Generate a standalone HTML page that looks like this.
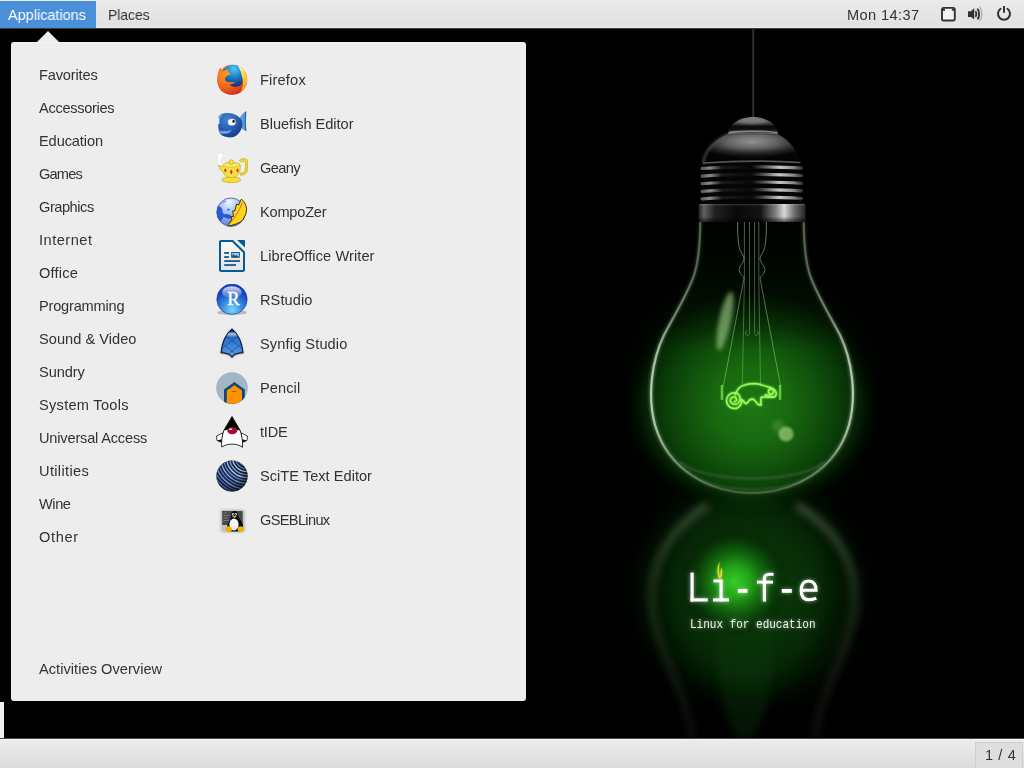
<!DOCTYPE html>
<html><head><meta charset="utf-8">
<style>
*{margin:0;padding:0;box-sizing:border-box}
html,body{width:1024px;height:768px;overflow:hidden;background:#000;font-family:"Liberation Sans",sans-serif;position:relative}
.abs{position:absolute}
#bg{position:absolute;left:0;top:0;width:1024px;height:768px}
#topbar{position:absolute;left:0;top:0;width:1024px;height:29px;background:linear-gradient(#eceef0 0,#eaeaea 1px,#e1e1e1 27px,#ededed 27px,#ededed 28px,#3a3a3a 28px,#3a3a3a 29px)}
#appbtn{position:absolute;left:0;top:1px;width:96px;height:27px;background:#4a90d9}
.tb{position:absolute;will-change:transform;font-size:14.6px;color:#2e3436;white-space:nowrap;line-height:1}
#menu{position:absolute;left:11px;top:42px;width:515px;height:659px;background:#ededed;border-radius:3px;border-top:1px solid #f3f3f3}
#arrow{position:absolute;left:36px;top:31px;width:0;height:0;border-left:12px solid transparent;border-right:12px solid transparent;border-bottom:12px solid #ededed}
.cat{position:absolute;will-change:transform;left:39px;font-size:14.6px;color:#2e3436;white-space:nowrap;line-height:1}
.app{position:absolute;will-change:transform;left:260px;font-size:14.6px;color:#2e3436;white-space:nowrap;line-height:1}
.ic{position:absolute;left:216px;width:32px;height:32px}
#botbar{position:absolute;left:0;top:738px;width:1024px;height:30px;background:linear-gradient(#4a4a4a 0,#4a4a4a 1px,#f6f6f6 1px,#f6f6f6 2px,#ececec 2px,#dcdcdc 30px)}
#ws{position:absolute;left:975px;top:742px;width:48px;height:27px;background:#dedede;border:1px solid #cfcfcf;border-bottom:none}
</style></head>
<body>
<svg id="bg" width="1024" height="768" viewBox="0 0 1024 768"><defs>
 <radialGradient id="gGlass" cx="752" cy="405" r="112" gradientUnits="userSpaceOnUse">
  <stop offset="0" stop-color="#1e7814"/>
  <stop offset="0.35" stop-color="#186810"/>
  <stop offset="0.7" stop-color="#0d460a"/>
  <stop offset="0.92" stop-color="#062c04"/>
  <stop offset="1" stop-color="#041e03"/>
 </radialGradient>
 <linearGradient id="gGlassTop" x1="0" y1="222" x2="0" y2="350" gradientUnits="userSpaceOnUse">
  <stop offset="0" stop-color="#000" stop-opacity="0.95"/>
  <stop offset="0.5" stop-color="#000" stop-opacity="0.7"/>
  <stop offset="1" stop-color="#000" stop-opacity="0"/>
 </linearGradient>
 <radialGradient id="gHalo" cx="752" cy="395" r="150" gradientUnits="userSpaceOnUse">
  <stop offset="0" stop-color="#062a04" stop-opacity="0.9"/>
  <stop offset="0.65" stop-color="#031802" stop-opacity="0.7"/>
  <stop offset="1" stop-color="#000" stop-opacity="0"/>
 </radialGradient>
 <radialGradient id="gReflWide" cx="750" cy="590" r="135" gradientUnits="userSpaceOnUse">
  <stop offset="0" stop-color="#0c420a"/>
  <stop offset="0.4" stop-color="#062a04"/>
  <stop offset="0.75" stop-color="#021202"/>
  <stop offset="1" stop-color="#000" stop-opacity="0"/>
 </radialGradient>
 <linearGradient id="gGhost" x1="0" y1="500" x2="0" y2="740" gradientUnits="userSpaceOnUse">
  <stop offset="0" stop-color="#7a8a70" stop-opacity="0.75"/>
  <stop offset="0.4" stop-color="#5a6a52" stop-opacity="0.45"/>
  <stop offset="1" stop-color="#4a5a42" stop-opacity="0.25"/>
 </linearGradient>
 <radialGradient id="gReflBright" cx="735" cy="582" r="55" gradientUnits="userSpaceOnUse">
  <stop offset="0" stop-color="#38cc26"/>
  <stop offset="0.3" stop-color="#22a018"/>
  <stop offset="0.65" stop-color="#0e600c" stop-opacity="0.6"/>
  <stop offset="1" stop-color="#000" stop-opacity="0"/>
 </radialGradient>
 <linearGradient id="gRing" x1="698.6" y1="0" x2="805.6" y2="0" gradientUnits="userSpaceOnUse">
  <stop offset="0" stop-color="#222"/>
  <stop offset="0.05" stop-color="#626262"/>
  <stop offset="0.15" stop-color="#222"/>
  <stop offset="0.35" stop-color="#090909"/>
  <stop offset="0.58" stop-color="#131313"/>
  <stop offset="0.72" stop-color="#808080"/>
  <stop offset="0.8" stop-color="#d8d8d8"/>
  <stop offset="0.9" stop-color="#6a6a6a"/>
  <stop offset="1" stop-color="#222"/>
 </linearGradient>
 <linearGradient id="gThr" x1="702" y1="0" x2="801.5" y2="0" gradientUnits="userSpaceOnUse">
  <stop offset="0" stop-color="#5a5a5a"/>
  <stop offset="0.08" stop-color="#8a8a8a"/>
  <stop offset="0.2" stop-color="#1a1a1a"/>
  <stop offset="0.5" stop-color="#080808"/>
  <stop offset="0.62" stop-color="#505050"/>
  <stop offset="0.78" stop-color="#c8c8c8"/>
  <stop offset="0.92" stop-color="#8a8a8a"/>
  <stop offset="1" stop-color="#3a3a3a"/>
 </linearGradient>
 <radialGradient id="gShoulder" cx="752" cy="142" r="55" gradientUnits="userSpaceOnUse" gradientTransform="translate(0 99.4) scale(1 0.3)">
  <stop offset="0" stop-color="#9a9a9a"/>
  <stop offset="0.45" stop-color="#6a6a6a"/>
  <stop offset="0.8" stop-color="#2a2a2a"/>
  <stop offset="1" stop-color="#0a0a0a"/>
 </radialGradient>
 <linearGradient id="gShoulderV" x1="0" y1="134" x2="0" y2="163" gradientUnits="userSpaceOnUse">
  <stop offset="0" stop-color="#000" stop-opacity="0"/>
  <stop offset="0.45" stop-color="#000" stop-opacity="0.1"/>
  <stop offset="1" stop-color="#000" stop-opacity="0.85"/>
 </linearGradient>
 <linearGradient id="gRingV" x1="0" y1="203.8" x2="0" y2="221.8" gradientUnits="userSpaceOnUse">
  <stop offset="0" stop-color="#fff" stop-opacity="0.22"/>
  <stop offset="0.12" stop-color="#fff" stop-opacity="0"/>
  <stop offset="0.7" stop-color="#000" stop-opacity="0"/>
  <stop offset="1" stop-color="#000" stop-opacity="0.6"/>
 </linearGradient>
 <linearGradient id="gSock" x1="701" y1="0" x2="802" y2="0" gradientUnits="userSpaceOnUse">
  <stop offset="0" stop-color="#111"/>
  <stop offset="0.08" stop-color="#555"/>
  <stop offset="0.22" stop-color="#141414"/>
  <stop offset="0.6" stop-color="#181818"/>
  <stop offset="0.82" stop-color="#7a7a7a"/>
  <stop offset="0.95" stop-color="#333"/>
  <stop offset="1" stop-color="#111"/>
 </linearGradient>
 <radialGradient id="gDome" cx="752" cy="150" r="45" gradientUnits="userSpaceOnUse" gradientTransform="translate(0 105) scale(1 0.3)">
  <stop offset="0" stop-color="#777"/>
  <stop offset="0.6" stop-color="#3a3a3a"/>
  <stop offset="1" stop-color="#111"/>
 </radialGradient>
 <linearGradient id="gCap" x1="0" y1="117" x2="0" y2="134.2" gradientUnits="userSpaceOnUse">
  <stop offset="0" stop-color="#7a7a7a"/>
  <stop offset="0.3" stop-color="#555"/>
  <stop offset="0.55" stop-color="#0a0a0a"/>
  <stop offset="0.75" stop-color="#111"/>
  <stop offset="1" stop-color="#6a6a6a"/>
 </linearGradient>
 <linearGradient id="gRim" x1="648" y1="0" x2="856" y2="0" gradientUnits="userSpaceOnUse">
  <stop offset="0" stop-color="#d8e8d0" stop-opacity="0.85"/>
  <stop offset="0.12" stop-color="#b8c8b0" stop-opacity="0.55"/>
  <stop offset="0.35" stop-color="#90a888" stop-opacity="0.35"/>
  <stop offset="0.65" stop-color="#90a888" stop-opacity="0.35"/>
  <stop offset="0.88" stop-color="#b8c8b0" stop-opacity="0.55"/>
  <stop offset="1" stop-color="#d8e8d0" stop-opacity="0.85"/>
 </linearGradient>
 <linearGradient id="gWire" x1="0" y1="222" x2="0" y2="386" gradientUnits="userSpaceOnUse">
  <stop offset="0" stop-color="#b0b8b0" stop-opacity="0.7"/>
  <stop offset="0.35" stop-color="#98b890" stop-opacity="0.6"/>
  <stop offset="1" stop-color="#70d048" stop-opacity="0.7"/>
 </linearGradient>
 <filter id="blur1" x="-50%" y="-50%" width="200%" height="200%"><feGaussianBlur stdDeviation="1"/></filter>
 <filter id="blur2" x="-50%" y="-50%" width="200%" height="200%"><feGaussianBlur stdDeviation="2"/></filter>
 <filter id="blur8" x="-50%" y="-50%" width="200%" height="200%"><feGaussianBlur stdDeviation="8"/></filter>
 <filter id="blur4" x="-50%" y="-50%" width="200%" height="200%"><feGaussianBlur stdDeviation="4"/></filter>
 <filter id="glow" x="-50%" y="-50%" width="200%" height="200%"><feGaussianBlur stdDeviation="1.2" result="b"/><feMerge><feMergeNode in="b"/><feMergeNode in="SourceGraphic"/></feMerge></filter>
 <filter id="tglow" x="-20%" y="-50%" width="140%" height="200%"><feGaussianBlur stdDeviation="2.2" result="b"/><feComponentTransfer in="b" result="b2"><feFuncA type="linear" slope="0.55"/></feComponentTransfer><feMerge><feMergeNode in="b2"/><feMergeNode in="SourceGraphic"/></feMerge></filter>
</defs>
<rect width="1024" height="768" fill="#000"/>
<ellipse cx="752" cy="395" rx="150" ry="150" fill="url(#gHalo)"/>
<rect x="600" y="440" width="310" height="300" fill="url(#gReflWide)"/>
<ellipse cx="745" cy="650" rx="28" ry="90" fill="#0a3a07" opacity="0.35" filter="url(#blur4)"/>
<ellipse cx="748" cy="590" rx="80" ry="95" fill="#0a3a07" opacity="0.3" filter="url(#blur8)"/>
<circle cx="735" cy="582" r="55" fill="url(#gReflBright)"/>
<path d="M708 505 C 668 530, 651 565, 652 600 C 654 650, 688 690, 692 740 M796 505 C 838 530, 856 565, 855 600 C 853 650, 818 690, 815 740" fill="none" stroke="url(#gGhost)" stroke-width="5" filter="url(#blur4)"/>
<rect x="752.2" y="28" width="2" height="92" fill="#2e2e2e"/>
<ellipse cx="752" cy="405" rx="112" ry="95" fill="#0c500a" opacity="0.45" filter="url(#blur8)"/>
<path d="M700.3 222 C 700 245, 699 258, 695 272 C 690 290, 676 312, 664 335 C 652 360, 647 395, 655 425 C 668 470, 710 493, 752 493 C 794 493, 836 470, 849 425 C 857 395, 852 360, 840 335 C 828 312, 814 290, 809 272 C 805 258, 804 245, 803.7 222 Z" fill="url(#gGlass)"/>
<path d="M700.3 222 C 700 245, 699 258, 695 272 C 690 290, 676 312, 664 335 C 652 360, 647 395, 655 425 C 668 470, 710 493, 752 493 C 794 493, 836 470, 849 425 C 857 395, 852 360, 840 335 C 828 312, 814 290, 809 272 C 805 258, 804 245, 803.7 222 Z" fill="url(#gGlassTop)"/>
<path d="M700.3 222 C 700 245, 699 258, 695 272 C 690 290, 676 312, 664 335 C 652 360, 647 395, 655 425 C 668 470, 710 493, 752 493 C 794 493, 836 470, 849 425 C 857 395, 852 360, 840 335 C 828 312, 814 290, 809 272 C 805 258, 804 245, 803.7 222" fill="none" stroke="url(#gRim)" stroke-width="2.2"/>
<path d="M700.3 222 C 700 245, 699 258, 695 272 C 690 290, 676 312, 664 335 C 652 360, 647 395, 655 425 C 668 470, 710 493, 752 493 C 794 493, 836 470, 849 425 C 857 395, 852 360, 840 335 C 828 312, 814 290, 809 272 C 805 258, 804 245, 803.7 222" fill="none" stroke="url(#gRim)" stroke-width="5" opacity="0.35" filter="url(#blur1)"/>
<path d="M680 462 C 705 484, 800 484, 824 462" fill="none" stroke="#8aa080" stroke-opacity="0.3" stroke-width="2" filter="url(#blur1)"/>
<path d="M700 480 C 725 492, 780 492, 804 480" fill="none" stroke="#8aa080" stroke-opacity="0.25" stroke-width="1.5" filter="url(#blur1)"/>
<g fill="none" stroke-width="0.9">
 <path d="M737.6 222 C 737.6 235, 738 244, 740 250 C 742 254, 744 256, 744 259 C 744 262, 739 266, 739 270 C 739 274, 744 276, 744 278 L 723.4 386" stroke="url(#gWire)"/>
 <path d="M766.4 222 C 766.4 235, 766 244, 764 250 C 762 254, 760 256, 760 259 C 760 262, 765 266, 765 270 C 765 274, 760 276, 760 278 L 780.6 386" stroke="url(#gWire)"/>
 <path d="M744.4 222 L 744.4 280 L 742.3 386" stroke="url(#gWire)" stroke-width="0.7"/>
 <path d="M758.8 222 L 758.8 280 L 760.5 386" stroke="url(#gWire)" stroke-width="0.7"/>
 <path d="M749.5 222 L 749.5 334 M754.6 222 L 754.6 334" stroke="url(#gWire)" stroke-width="0.7"/>
 <path d="M747 331 C 744 333, 746 336, 749 335 M757 331 C 760 333, 758 336, 755 335" stroke="#8ad060" stroke-opacity="0.6" stroke-width="0.8"/>
</g>
<ellipse cx="725" cy="321" rx="6" ry="30" transform="rotate(12 725 321)" fill="#a0d088" fill-opacity="0.62" filter="url(#blur2)"/>
<circle cx="786" cy="434" r="7.5" fill="#a8d888" fill-opacity="0.65" filter="url(#blur1)"/>
<circle cx="778" cy="426" r="6" fill="#a8d888" fill-opacity="0.22" filter="url(#blur2)"/>
<g fill="none" stroke="#98ff58" stroke-width="1.5" stroke-linecap="round" stroke-linejoin="round" filter="url(#glow)">
 <path d="M735.2 394.7 C 737 389, 740 386.5, 743 385.6 C 747 384, 751 383.6, 754.7 383.6 C 758 383.8, 761 384.5, 763.8 385.6 L 770.3 387.5 C 772.5 388.5, 774 389, 774.9 390.1 C 776 391.5, 776.5 393, 776.2 394.7 C 775.5 396.5, 774 397.3, 772.9 397.3 L 765.1 394.7 M 772.9 397.3 C 768 397.5, 763 396.5, 761.2 397.3 C 760.5 399.5, 761 403, 761.2 405.1 C 759.5 405.2, 758 404.5, 757.3 403.8 C 756 402, 755 399.8, 753.4 399.2 C 752 399, 750.5 399.3, 749.5 399.9 C 748.5 401.5, 747.5 403.5, 746.2 403.8 C 745 403.5, 744.2 402, 743.6 401.2 L 741.5 399.5"/>
 <path d="M741.5 399.5 C 742.5 404, 739 408.5, 734.5 408.5 C 730 408.5, 726.5 405, 726.5 400.5 C 726.5 396, 730 392.8, 734.5 392.8 C 738.5 392.8, 740.5 396, 740 399.5 C 739.5 402.5, 737 404.5, 734.5 404.3 C 731.5 404, 730 402, 730.3 400 C 730.6 398, 732.5 396.8, 734.3 397 C 736 397.3, 736.8 398.8, 736.5 400.2 C 736.2 401.3, 735 401.8, 734.2 401.4"/>
 <circle cx="771" cy="391.6" r="2.6"/>
</g>
<g stroke="#70e048" stroke-width="2.6" stroke-linecap="round" fill="none" opacity="0.8"><line x1="722" y1="386" x2="722" y2="399"/><line x1="780" y1="386" x2="780" y2="399"/></g>
<rect x="698.6" y="203.8" width="107" height="18" rx="2.5" fill="url(#gRing)"/>
<rect x="698.6" y="203.8" width="107" height="18" rx="2.5" fill="url(#gRingV)"/>
<path d="M727.5 134.2 C 713 141, 705 152, 703 163 L 701.7 204 L 801.7 204 L 800.5 163 C 798 152, 791 141, 778.3 134.2 Z" fill="#050505"/>
<path d="M727.5 134.2 C 713 141, 705 152, 703 163 L 800.5 163 C 798 152, 791 141, 778.3 134.2 Z" fill="url(#gShoulder)"/>
<path d="M727.5 134.2 C 713 141, 705 152, 703 163 L 800.5 163 C 798 152, 791 141, 778.3 134.2 Z" fill="url(#gShoulderV)"/>
<path d="M727.5 134.2 C 713 141, 705 152, 703 163" fill="none" stroke="#777" stroke-opacity="0.6" stroke-width="2" filter="url(#blur1)"/>
<path d="M703 163 C 740 160.5, 770 160.5, 800.5 162.5" stroke="#9a9a9a" stroke-opacity="0.55" stroke-width="1.6" fill="none"/>
 <path d="M702 168.5 C 730 166.3, 775 166.3, 801.5 168.1" stroke="url(#gThr)" stroke-width="3.2" fill="none" stroke-linecap="round"/>
 <path d="M702 176.1 C 730 173.9, 775 173.9, 801.5 175.7" stroke="url(#gThr)" stroke-width="3.2" fill="none" stroke-linecap="round"/>
 <path d="M702 183.7 C 730 181.5, 775 181.5, 801.5 183.3" stroke="url(#gThr)" stroke-width="3.2" fill="none" stroke-linecap="round"/>
 <path d="M702 191.3 C 730 189.1, 775 189.1, 801.5 190.9" stroke="url(#gThr)" stroke-width="3.2" fill="none" stroke-linecap="round"/>
 <path d="M702 198.9 C 730 196.7, 775 196.7, 801.5 198.5" stroke="url(#gThr)" stroke-width="3.2" fill="none" stroke-linecap="round"/>
<path d="M727.5 134.2 C 729 123, 741 117, 753 117 C 765 117, 777 123, 778.3 134.2 Z" fill="url(#gCap)"/>
<path d="M729 133 C 735 130.5, 770 130.5, 777 133" fill="none" stroke="#9a9a9a" stroke-width="1.6" stroke-opacity="0.8"/>
<ellipse cx="752" cy="121.5" rx="14" ry="3" fill="#aaa" opacity="0.35" filter="url(#blur1)"/>
<g filter="url(#tglow)" fill="#fff">
 <rect x="690.5" y="572.6" width="3.2" height="29"/><rect x="690.5" y="598.3" width="17.3" height="3.2"/>
 <rect x="719.5" y="580.4" width="3.2" height="21"/><rect x="713" y="598.3" width="16" height="3.2"/><rect x="713.5" y="579.4" width="9.2" height="3"/>
 <rect x="737.9" y="589" width="9.5" height="3.8"/>
 <rect x="762.8" y="577" width="3.2" height="24.6"/><rect x="757" y="580.6" width="16" height="3"/>
 <path d="M764.4 579 C 764.4 575.2, 766.5 574.3, 769.5 574.3 L 773.5 574.3" fill="none" stroke="#fff" stroke-width="3.1"/>
 <rect x="781.8" y="589" width="10" height="3.8"/>
 <path d="M801.2 590.3 H 816 C 816 584, 813 581, 808.5 581 C 803.5 581, 801.2 585, 801.2 590.5 C 801.2 596.5, 804 599.8, 809 599.8 C 812 599.8, 814.5 599.2, 816.2 598.2" fill="none" stroke="#fff" stroke-width="3.1"/>
 <text x="690" y="628.3" font-family="Liberation Mono" font-size="13" fill="#eef4ea" textLength="125.5" lengthAdjust="spacingAndGlyphs">Linux for education</text>
</g>
<g filter="url(#glow)"><path d="M719.8 562 C 716.8 567, 716.5 574, 719.8 579.5 C 722.5 576.5, 722.8 571, 721.2 567.5 C 720.8 570.5, 720.6 574, 719.6 576.5 C 718.5 573, 718.6 567, 719.8 562 Z" fill="#d8dc28"/></g>
</svg>

<div id="topbar"></div>
<div id="appbtn"></div>
<div class="tb" style="left:8px;top:8px;color:#fff;transform:scaleX(0.99);transform-origin:0 0">Applications</div>
<div class="tb" style="left:108px;top:8px;transform:scaleX(0.95);transform-origin:0 0">Places</div>
<div class="tb" style="left:847px;top:8px;letter-spacing:0.4px">Mon 14:37</div>

<!--TRAY-->
<svg class="abs" style="left:936px;top:2px" width="84" height="24" viewBox="0 0 84 24">
 <rect x="6" y="5.9" width="12.8" height="12.6" rx="1.8" fill="#f2f2f2" stroke="#2e3436" stroke-width="1.9"/>
 <rect x="7" y="6.8" width="2" height="2" fill="#2e3436"/><rect x="15.8" y="6.8" width="2" height="2" fill="#2e3436"/>
 <path d="M32 9.2 L 35 9.2 L 38.2 6 L 38.2 17.6 L 35 15 L 32 15 Z" fill="#2e3436"/>
 <path d="M39.3 9.3 C 40.7 10.5, 40.7 13.5, 39.3 14.8" fill="none" stroke="#2e3436" stroke-width="1.9"/>
 <path d="M41.3 6.8 C 43.8 8.8, 43.8 15.2, 41.3 17.2" fill="none" stroke="#2e3436" stroke-width="1.9"/>
 <path d="M43.3 5.2 C 46.6 7.8, 46.6 16.2, 43.3 18.8" fill="none" stroke="#b4b4b4" stroke-width="1.5"/>
 <path d="M64.6 6.8 A 6 6 0 1 0 71.4 6.8" fill="none" stroke="#2e3436" stroke-width="2" stroke-linecap="round"/>
 <line x1="68" y1="4" x2="68" y2="10.8" stroke="#2e3436" stroke-width="2"/>
</svg>

<!--/TRAY-->
<div id="arrow"></div>
<div id="menu"></div>

<div class="cat" style="top:68px;letter-spacing:-0.162px">Favorites</div>
<div class="cat" style="top:101px;letter-spacing:-0.300px">Accessories</div>
<div class="cat" style="top:134px;letter-spacing:-0.112px">Education</div>
<div class="cat" style="top:167px;letter-spacing:-0.800px">Games</div>
<div class="cat" style="top:200px;letter-spacing:-0.457px">Graphics</div>
<div class="cat" style="top:233px;letter-spacing:0.500px">Internet</div>
<div class="cat" style="top:266px;letter-spacing:0.190px">Office</div>
<div class="cat" style="top:299px;letter-spacing:-0.200px">Programming</div>
<div class="cat" style="top:332px;letter-spacing:0.025px">Sound &amp; Video</div>
<div class="cat" style="top:365px;letter-spacing:-0.080px">Sundry</div>
<div class="cat" style="top:398px;letter-spacing:0.273px">System Tools</div>
<div class="cat" style="top:431px;letter-spacing:-0.187px">Universal Access</div>
<div class="cat" style="top:464px;letter-spacing:0.338px">Utilities</div>
<div class="cat" style="top:497px;letter-spacing:-0.433px">Wine</div>
<div class="cat" style="top:530px;letter-spacing:0.650px">Other</div>
<div class="cat" style="top:662px;letter-spacing:0.039px">Activities Overview</div>

<div class="app" style="top:73px;letter-spacing:0.183px">Firefox</div>
<div class="app" style="top:117px;letter-spacing:-0.043px">Bluefish Editor</div>
<div class="app" style="top:161px;letter-spacing:-0.625px">Geany</div>
<div class="app" style="top:205px;letter-spacing:-0.214px">KompoZer</div>
<div class="app" style="top:249px;letter-spacing:0.085px">LibreOffice Writer</div>
<div class="app" style="top:293px;letter-spacing:0.083px">RStudio</div>
<div class="app" style="top:337px;letter-spacing:0.108px">Synfig Studio</div>
<div class="app" style="top:381px;letter-spacing:0.090px">Pencil</div>
<div class="app" style="top:425px;letter-spacing:-0.200px">tIDE</div>
<div class="app" style="top:469px;letter-spacing:0.019px">SciTE Text Editor</div>
<div class="app" style="top:513px;letter-spacing:-0.663px">GSEBLinux</div>

<!--ICONS-->
<!-- Firefox -->
<svg class="ic" style="top:64px" viewBox="0 0 32 32">
 <defs>
  <radialGradient id="ffO" cx="10" cy="10" r="22" gradientUnits="userSpaceOnUse"><stop offset="0" stop-color="#ff9820"/><stop offset="0.55" stop-color="#f26a1e"/><stop offset="1" stop-color="#d2321c"/></radialGradient>
  <linearGradient id="ffY" x1="22" y1="2" x2="28" y2="26" gradientUnits="userSpaceOnUse"><stop offset="0" stop-color="#fff0a0"/><stop offset="0.35" stop-color="#ffd838"/><stop offset="1" stop-color="#ff9a1c"/></linearGradient>
  <radialGradient id="ffB" cx="18" cy="5" r="18" gradientUnits="userSpaceOnUse"><stop offset="0" stop-color="#50c8f2"/><stop offset="0.5" stop-color="#1c7cc8"/><stop offset="1" stop-color="#0e2c72"/></radialGradient>
 </defs>
 <circle cx="16.2" cy="15.8" r="15" fill="url(#ffO)"/>
 <circle cx="17.2" cy="12.3" r="11.6" fill="url(#ffB)"/>
 <path d="M21.5 1.6 C 27 3.5, 31 9, 31.2 15.8 C 31.2 21, 28.5 25.5, 24.5 28.5 C 26.5 24, 27.2 19, 26.5 14.5 C 25.8 9.5, 24 5, 21.5 1.6 Z" fill="url(#ffY)"/>
 <path d="M23.5 3 C 25.5 6, 26.5 9.5, 26.8 13" fill="none" stroke="#fff" stroke-opacity="0.6" stroke-width="0.8"/>
 <path d="M1.3 14.5 C 1.5 9.5, 2.8 6, 4.3 3.6 L 6.6 7.4 C 8.5 6.6, 10.5 5.6, 12 4.8 C 12 7, 12.5 8.7, 14.5 10.2 C 12.5 11.2, 10.6 11.6, 9.6 13.2 C 8.8 14.8, 9.2 16.8, 11.2 17.7 C 13.6 18.6, 16.6 17.6, 19.2 18.3 C 17.8 19.9, 15.6 20.6, 13.4 20.7 C 17 23.2, 21.5 23.5, 25 21 C 26.2 20, 26.6 18.5, 26.8 17 C 27.6 22, 25.5 26.5, 21.5 29 C 16.5 31.5, 9.5 31, 5 26.5 C 2.5 23.5, 1.2 19, 1.3 14.5 Z" fill="url(#ffO)"/>
 <path d="M12.2 9.2 L 13.8 9.6 L 12.6 10.6 Z" fill="#ffd0a0"/>
</svg>
<!-- Bluefish -->
<svg class="ic" style="top:108px" viewBox="0 0 32 32">
 <defs><radialGradient id="bfB" cx="11" cy="11" r="17" gradientUnits="userSpaceOnUse"><stop offset="0" stop-color="#4282d4"/><stop offset="0.6" stop-color="#2a60b4"/><stop offset="1" stop-color="#1a4490"/></radialGradient></defs>
 <path d="M24 9.5 C 26 6.5, 28 4, 30.5 3 C 30 10, 29.5 17, 30.6 23.3 C 28.5 22.5, 26.5 21.5, 25 19.5 Z" fill="#5a98e0"/>
 <path d="M29.6 4 C 29.3 10, 29 17, 29.8 22.5" fill="none" stroke="#2a4a78" stroke-width="0.8"/>
 <path d="M2.5 9 C 5 5.5, 9 4.8, 12 5 C 18 5.2, 23 8, 25.5 12 C 27.5 16, 26 23, 21 27 C 18 29.3, 15 29.6, 12.5 29.3 C 8 28.8, 4.5 27, 3.5 24.5 C 2 21, 1.8 13, 2.5 9 Z" fill="url(#bfB)"/>
 <path d="M2.3 9.5 C 3 7, 5 5.8, 6.8 5.6 C 6 7.5, 5 9.5, 3 11 Z" fill="#6aa4e8"/>
 <path d="M2.8 22.5 C 7 23.5, 12 23, 15.8 22 C 14 25.5, 9 26.5, 4.5 25.5 Z" fill="#6aa4e8"/>
 <ellipse cx="15.8" cy="14.2" rx="4.2" ry="3.6" fill="#f4f4f4" stroke="#2a5aa8" stroke-width="0.5"/>
 <circle cx="17.6" cy="13.4" r="1.3" fill="#111"/>
 <path d="M2.5 10 C 3 12, 3 14, 2.6 16" stroke="#fff" stroke-width="1.2" fill="none"/>
</svg>
<!-- Geany -->
<svg class="ic" style="top:152px" viewBox="0 0 32 32">
 <path d="M3.5 1 C 6 0, 8 1.5, 7.5 4 C 7.2 6, 5.5 7, 5.5 9 C 5.5 11, 6.5 12.5, 5 13.5 C 3 14, 1.5 12.5, 2 10.5 C 2.3 9, 1 7, 1 5 C 1 3, 2 1.5, 3.5 1 Z" fill="#fcfcfc" stroke="#d8d8d8" stroke-width="0.6"/>
 <path d="M23.5 8.5 C 25 6.5, 29 6, 31 7.5 C 32.2 9, 31.8 16, 31 19.5 C 30 22.5, 27 23.5, 24 23 L 24.5 21 C 26.5 21.2, 28.5 20.5, 29 18.5 C 29.8 15, 29.8 10.5, 29 9.5 C 28 8.5, 25.5 9, 24.5 10.2 Z" fill="#f0dc3a" stroke="#c8a800" stroke-width="0.7"/>
 <ellipse cx="15.3" cy="27.8" rx="9.5" ry="2.8" fill="#f2de40" stroke="#c8a800" stroke-width="0.7"/>
 <path d="M2.5 13.5 C 5 14.5, 6.5 15, 7.5 14.5 C 7.5 12, 11 10.5, 15.3 10.5 C 20 10.5, 24 11.5, 24.2 13.5 C 24.5 19, 23 24, 17 25.5 C 12 26, 9 24, 7 20 C 5 18.5, 3 16, 2.5 13.5 Z" fill="#f4e048" stroke="#c8a800" stroke-width="0.7"/>
 <ellipse cx="15.3" cy="13" rx="8.5" ry="2.2" fill="#f8ea70" stroke="#d0b000" stroke-width="0.5"/>
 <circle cx="15.3" cy="10" r="2.3" fill="#f4e048" stroke="#c8a800" stroke-width="0.6"/>
 <path d="M9.3 16.2 L 10.6 18.4 L 9.3 20.6 L 8 18.4 Z M15.3 17.6 L 16.7 20 L 15.3 22.4 L 13.9 20 Z M21.5 16.2 L 22.8 18.4 L 21.5 20.6 L 20.2 18.4 Z" fill="#e02828"/>
</svg>
<!-- KompoZer -->
<svg class="ic" style="top:196px" viewBox="0 0 32 32">
 <defs><radialGradient id="kzG" cx="13" cy="6" r="22" gradientUnits="userSpaceOnUse"><stop offset="0" stop-color="#f4f8ff"/><stop offset="0.45" stop-color="#a8c4f4"/><stop offset="1" stop-color="#6a90e0"/></radialGradient>
 <clipPath id="kzC"><circle cx="15" cy="16.2" r="14.2"/></clipPath></defs>
 <circle cx="15" cy="16.2" r="14.2" fill="url(#kzG)" stroke="#4a4898" stroke-width="0.8"/>
 <g clip-path="url(#kzC)" fill="#2a5ad0">
  <path d="M0 10 C 3 9, 5 11, 6 13 C 7 15, 6 17, 8 18 C 9 19, 7 22, 6 24 C 4 26, 1 25, 0 22 Z"/>
  <path d="M7 19 C 9 17.5, 12 18, 14 19 C 16 20, 16 22, 14 22.5 C 12 23, 10 22, 8.5 21.5 Z"/>
  <path d="M11 13 C 12 12, 14 12.5, 14 14 C 13.5 15, 12 15, 11 14 Z" fill="#4a78e0"/>
  <path d="M2 6 C 5 4, 9 3.5, 11 5 C 9 7, 6 7.5, 4 9 Z" fill="#88a8e8"/>
 </g>
 <path d="M25.2 3.3 C 26.5 4, 27.2 4.6, 27.8 5.4 L 29.9 9.5 L 30.6 13.2 L 29.9 17.9 L 28.3 21 L 26.7 24.1 L 24.1 26.2 L 20.5 27.8 L 15.8 29.3 L 11.6 29.9 L 14.5 25.2 L 15.8 24.1 L 15 20.5 L 17.4 20.5 L 16.8 14.8 L 18.9 14.8 L 20.5 8 L 22.6 9 Z" fill="#ffd41a" stroke="#2a2410" stroke-width="0.9" stroke-linejoin="round"/>
 <path d="M11.8 29.8 C 17 24, 23 16, 26.5 6.5" fill="none" stroke="#b8660e" stroke-width="0.9"/>
</svg>
<!-- LibreOffice Writer -->
<svg class="ic" style="top:240px" viewBox="0 0 32 32">
 <defs><linearGradient id="lwF" x1="0" y1="0" x2="0" y2="32" gradientUnits="userSpaceOnUse"><stop offset="0" stop-color="#fafafa"/><stop offset="1" stop-color="#e2e2e2"/></linearGradient></defs>
 <path d="M5 1 L 16.6 1 L 28 12.2 L 28 29.8 C 28 30.5, 27.5 31, 26.8 31 L 5.2 31 C 4.5 31, 4 30.5, 4 29.8 L 4 2 C 4 1.4, 4.4 1, 5 1 Z" fill="url(#lwF)" stroke="#045a94" stroke-width="2"/>
 <path d="M21 0 L 28 0 C 28.6 0, 29 0.4, 29 1 L 29 7.5 Z" fill="#045a94"/>
 <rect x="8.2" y="12.1" width="4.8" height="1.7" fill="#045084"/>
 <rect x="8.2" y="16.2" width="4.8" height="1.7" fill="#045084"/>
 <rect x="8.2" y="20.2" width="15.8" height="1.7" fill="#045084"/>
 <rect x="8.2" y="24.2" width="11.8" height="1.7" fill="#045084"/>
 <rect x="15.2" y="12" width="8.6" height="5.8" fill="#045084"/>
 <rect x="16.1" y="12.9" width="6.8" height="4" fill="#8ad0f8"/>
 <path d="M16.1 16.9 L 16.8 14.4 L 17.6 14.2 L 18.4 15.2 L 19.5 15.8 L 20.3 15 L 21.2 15.8 L 22.9 16.9 Z" fill="#5a4030"/>
</svg>
<!-- RStudio -->
<svg class="ic" style="top:284px" viewBox="0 0 32 32">
 <defs>
  <radialGradient id="rsG" cx="16" cy="26" r="20" gradientUnits="userSpaceOnUse"><stop offset="0" stop-color="#78d8f8"/><stop offset="0.5" stop-color="#3a8ee0"/><stop offset="1" stop-color="#1444c0"/></radialGradient>
  <linearGradient id="rsH" x1="0" y1="2" x2="0" y2="14" gradientUnits="userSpaceOnUse"><stop offset="0" stop-color="#fff" stop-opacity="0.85"/><stop offset="1" stop-color="#fff" stop-opacity="0.05"/></linearGradient>
  <radialGradient id="rsS" cx="16" cy="28.5" r="15" gradientUnits="userSpaceOnUse" gradientTransform="translate(0 24) scale(1 0.15)"><stop offset="0" stop-color="#000" stop-opacity="0.35"/><stop offset="1" stop-color="#000" stop-opacity="0"/></radialGradient>
 </defs>
 <ellipse cx="16" cy="28.5" rx="15" ry="2.5" fill="#888" opacity="0.5"/>
 <circle cx="16" cy="15.3" r="15.2" fill="url(#rsG)" stroke="#1040b0" stroke-width="0.6"/>
 <ellipse cx="15.8" cy="8.3" rx="9.8" ry="6" fill="url(#rsH)"/>
 <text x="17.4" y="21.2" font-family="Liberation Serif" font-size="18.5" fill="#fff" stroke="#fff" stroke-width="0.4" text-anchor="middle">R</text>
</svg>
<!-- Synfig -->
<svg class="ic" style="top:328px" viewBox="0 0 32 32">
 <defs>
  <linearGradient id="sfG" x1="0" y1="1" x2="0" y2="29" gradientUnits="userSpaceOnUse"><stop offset="0" stop-color="#0e2a50"/><stop offset="0.1" stop-color="#1a4a80"/><stop offset="0.17" stop-color="#a8c8f0"/><stop offset="0.3" stop-color="#2a6cc4"/><stop offset="0.6" stop-color="#3a82d8"/><stop offset="1" stop-color="#5a98e0"/></linearGradient>
  <clipPath id="sfC"><path d="M16 0.9 C 22 6, 26 14, 27 24.6 C 22 24.8, 18 26, 16 29.3 C 14 26, 10 24.8, 5.1 24.6 C 6 14, 10 6, 16 0.9 Z"/></clipPath>
  <filter id="sfSh" x="-30%" y="-30%" width="160%" height="160%"><feGaussianBlur stdDeviation="0.9"/></filter>
 </defs>
 <path d="M16 1.9 C 22 7, 26 15, 27.5 25.6 C 22 25.8, 18 27, 16 30.3 C 14 27, 10 25.8, 4.6 25.6 C 6 15, 10 7, 16 1.9 Z" fill="#000" opacity="0.35" filter="url(#sfSh)"/>
 <path d="M16 0.9 C 22 6, 26 14, 27 24.6 C 22 24.8, 18 26, 16 29.3 C 14 26, 10 24.8, 5.1 24.6 C 6 14, 10 6, 16 0.9 Z" fill="url(#sfG)" stroke="#0a1a30" stroke-width="1.1"/>
 <g clip-path="url(#sfC)" stroke="#143468" stroke-width="0.6" opacity="0.75">
  <line x1="2" y1="12" x2="30" y2="34"/><line x1="30" y1="12" x2="2" y2="34"/>
  <line x1="8" y1="6" x2="30" y2="24"/><line x1="24" y1="6" x2="2" y2="24"/>
  <line x1="0" y1="18" x2="22" y2="36"/><line x1="32" y1="18" x2="10" y2="36"/>
 </g>
</svg>
<!-- Pencil -->
<svg class="ic" style="top:372px" viewBox="0 0 32 32">
 <defs><clipPath id="pcC"><circle cx="16" cy="16" r="15.8"/></clipPath></defs>
 <circle cx="16" cy="16" r="15.8" fill="#a2b6c6"/>
 <g clip-path="url(#pcC)">
  <path d="M18.4 10 L 28.8 17.4 L 28.8 33 L 8 33 L 8 17.4 Z" fill="#0e4a78"/>
  <path d="M18.4 13.2 L 26 18.4 L 26 33 L 10.8 33 L 10.8 18.4 Z" fill="#ff9200"/>
 </g>
 <ellipse cx="18.1" cy="19.4" rx="2.8" ry="0.6" fill="#8a6a40"/>
</svg>
<!-- tIDE -->
<svg class="ic" style="top:416px" viewBox="0 0 32 32">
 <path d="M1 24.5 L 0.5 20 L 6.5 17 L 7 27 Z" fill="#fff" stroke="#111" stroke-width="0.8"/>
 <path d="M1 24.5 L 7 27 L 6.8 23 Z" fill="#111"/>
 <path d="M31 24.5 L 31.5 20 L 25.5 17 L 25 27 Z" fill="#fff" stroke="#111" stroke-width="0.8"/>
 <path d="M31 24.5 L 25 27 L 25.2 23 Z" fill="#111"/>
 <path d="M16 0.5 C 18 4, 21 9, 24.2 14.5 C 26 20, 27 26, 26.5 31.2 C 23 29, 19.5 28, 16 28.2 C 12.5 28, 9 29, 5.8 31 C 5 26, 6 20, 7.8 14.5 C 11 9, 14 4, 16 0.5 Z" fill="#fff" stroke="#111" stroke-width="0.9"/>
 <path d="M16 0.5 C 18 4, 21 9, 24.2 14.5 C 21 13, 11 13, 7.8 14.5 C 11 9, 14 4, 16 0.5 Z" fill="#000"/>
 <ellipse cx="16.3" cy="14.8" rx="5" ry="3.5" fill="#a8102e"/>
 <ellipse cx="14.5" cy="13.2" rx="1.8" ry="0.9" fill="#fff" opacity="0.8"/>
</svg>
<!-- SciTE -->
<svg class="ic" style="top:460px" viewBox="0 0 32 32">
 <defs>
  <clipPath id="stC"><circle cx="16" cy="16" r="15.6"/></clipPath>
  <radialGradient id="stS" cx="13" cy="12" r="20" gradientUnits="userSpaceOnUse"><stop offset="0" stop-color="#000" stop-opacity="0"/><stop offset="0.6" stop-color="#000" stop-opacity="0.15"/><stop offset="1" stop-color="#000" stop-opacity="0.6"/></radialGradient>
 </defs>
 <circle cx="16" cy="16" r="15.6" fill="#1e2850"/>
 <g clip-path="url(#stC)" fill="none" stroke-width="1.25">
  <circle cx="31" cy="-3" r="6.0" stroke="#6a90d8"/>
  <circle cx="31" cy="-3" r="8.9" stroke="#c0d8f8"/>
  <circle cx="31" cy="-3" r="11.8" stroke="#7aa0e8"/>
  <circle cx="31" cy="-3" r="14.7" stroke="#e0f0ff"/>
  <circle cx="31" cy="-3" r="17.6" stroke="#88b0f0"/>
  <circle cx="31" cy="-3" r="20.5" stroke="#c8e0f8"/>
  <circle cx="31" cy="-3" r="23.4" stroke="#6a98e8"/>
  <circle cx="31" cy="-3" r="26.3" stroke="#a8c8f0"/>
  <circle cx="31" cy="-3" r="29.2" stroke="#5a88d8"/>
  <circle cx="31" cy="-3" r="32.1" stroke="#98b8e8"/>
  <circle cx="31" cy="-3" r="35.0" stroke="#4a78c8"/>
  <circle cx="31" cy="-3" r="37.9" stroke="#7898d0"/>
  <circle cx="31" cy="-3" r="40.8" stroke="#3a68b8"/>
  <circle cx="31" cy="-3" r="43.7" stroke="#5a78b8"/>
 </g>
 <circle cx="16" cy="16" r="15.6" fill="url(#stS)"/>
</svg>
<!-- GSEBLinux -->
<svg class="ic" style="top:504px" viewBox="0 0 32 32">
 <defs><filter id="gsSh" x="-30%" y="-30%" width="160%" height="160%"><feGaussianBlur stdDeviation="1.2"/></filter></defs>
 <rect x="4.5" y="5.5" width="24.5" height="23" rx="3" fill="#000" opacity="0.18" filter="url(#gsSh)"/>
 <rect x="5.1" y="5.9" width="22.7" height="16.1" rx="1" fill="#c8c8c0"/>
 <rect x="6.2" y="7" width="20.5" height="14" fill="#4a4a4a"/>
 <g stroke="#8a8a8a" stroke-width="0.7"><line x1="7.5" y1="9" x2="11" y2="9"/><line x1="7.5" y1="11.5" x2="13" y2="11.5"/><line x1="7.5" y1="14" x2="12" y2="14"/><line x1="7.5" y1="16.5" x2="13" y2="16.5"/></g>
 <path d="M18.4 6.9 C 21 6.9, 22 9, 22 11 C 22 13, 25 16, 26.5 19.5 C 27.5 22, 27.2 25, 25 27.5 L 12 27.5 C 10.5 25, 11 21, 12.5 18.5 C 14 16, 15 13.5, 15 11 C 15 9, 16 6.9, 18.4 6.9 Z" fill="#0a0a14"/>
 <ellipse cx="18" cy="20.5" rx="4.6" ry="6" fill="#f4f4f4"/>
 <ellipse cx="17" cy="10.3" rx="1.1" ry="1.4" fill="#e8e8e8"/><ellipse cx="19.8" cy="10.3" rx="1.1" ry="1.4" fill="#e8e8e8"/><circle cx="17.3" cy="10.6" r="0.5" fill="#000"/><circle cx="19.5" cy="10.6" r="0.5" fill="#000"/>
 <path d="M15.8 12 L 20.8 12 L 18.3 14 Z" fill="#f0b000"/>
 <path d="M9 25 C 10 22, 13 21.5, 15 23 C 16.5 25, 16.3 27.5, 14 28 C 12 28.2, 10 27.5, 9 25 Z" fill="#f0b400"/>
 <path d="M28 25 C 27.5 22, 24 21.5, 22.5 23 C 21 25, 21.5 27.8, 24 28 C 26 28, 28 27, 28 25 Z" fill="#f0b400"/>
</svg>

<!--/ICONS-->
<div id="botbar"></div>
<div id="ws"></div>
<div class="tb" style="left:985px;top:748px;letter-spacing:0.6px">1 / 4</div>
<div class="abs" style="left:0;top:702px;width:4px;height:36px;background:#f0f0f0"></div>
</body></html>
